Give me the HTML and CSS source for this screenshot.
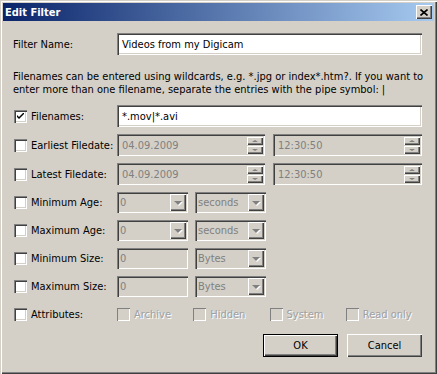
FILE: index.html
```html
<!DOCTYPE html>
<html lang="en">
<head>
    <meta charset="UTF-8">
    <title>Edit Filter</title>
    <link rel="stylesheet" href="styles.css">
</head>
<body>
    <div class="window">
        <div class="titlebar">
            <span class="title">Edit Filter</span>
            <span class="close-btn">
                <svg width="8" height="7" viewBox="0 0 8 7"><path d="M0.5 0.5 L7.5 6.5 M7.5 0.5 L0.5 6.5" stroke="#000" stroke-width="1.6" fill="none"/></svg>
            </span>
        </div>
        <div class="content">
            <div class="row">
                <span class="label">Filter Name:</span>
                <div class="field wide"><span class="value">Videos from my Digicam</span></div>
            </div>
            <p class="hint">Filenames can be entered using wildcards, e.g. *.jpg or index*.htm?. If you want to<br>enter more than one filename, separate the entries with the pipe symbol: |</p>

            <div class="row first">
                <label class="check"><span class="box"><svg width="7" height="7" viewBox="0 0 7 7"><path d="M0 2 L0 4 L2 6 L7 1 L7 -1 L2 4 Z" fill="#000"/></svg></span>Filenames:</label>
                <div class="field wide"><span class="value">*.mov|*.avi</span></div>
            </div>
            <div class="row">
                <label class="check"><span class="box"></span>Earliest Filedate:</label>
                <div class="field date disabled">
                    <span class="value">04.09.2009</span>
                    <span class="spinner"><span class="spin-btn"><i class="up"></i></span><span class="spin-btn"><i class="down"></i></span></span>
                </div>
                <div class="field time disabled">
                    <span class="value">12:30:50</span>
                    <span class="spinner"><span class="spin-btn"><i class="up"></i></span><span class="spin-btn"><i class="down"></i></span></span>
                </div>
            </div>
            <div class="row">
                <label class="check"><span class="box"></span>Latest Filedate:</label>
                <div class="field date disabled">
                    <span class="value">04.09.2009</span>
                    <span class="spinner"><span class="spin-btn"><i class="up"></i></span><span class="spin-btn"><i class="down"></i></span></span>
                </div>
                <div class="field time disabled">
                    <span class="value">12:30:50</span>
                    <span class="spinner"><span class="spin-btn"><i class="up"></i></span><span class="spin-btn"><i class="down"></i></span></span>
                </div>
            </div>
            <div class="row small">
                <label class="check"><span class="box"></span>Minimum Age:</label>
                <div class="field combo disabled"><span class="value">0</span><span class="drop"><i></i></span></div>
                <div class="field combo unit disabled"><span class="value">seconds</span><span class="drop"><i></i></span></div>
            </div>
            <div class="row small">
                <label class="check"><span class="box"></span>Maximum Age:</label>
                <div class="field combo disabled"><span class="value">0</span><span class="drop"><i></i></span></div>
                <div class="field combo unit disabled"><span class="value">seconds</span><span class="drop"><i></i></span></div>
            </div>
            <div class="row small">
                <label class="check"><span class="box"></span>Minimum Size:</label>
                <div class="field combo disabled"><span class="value">0</span></div>
                <div class="field combo unit disabled"><span class="value">Bytes</span><span class="drop"><i></i></span></div>
            </div>
            <div class="row small">
                <label class="check"><span class="box"></span>Maximum Size:</label>
                <div class="field combo disabled"><span class="value">0</span></div>
                <div class="field combo unit disabled"><span class="value">Bytes</span><span class="drop"><i></i></span></div>
            </div>
            <div class="row small attributes">
                <label class="check"><span class="box"></span>Attributes:</label>
                <span class="attr"><span class="box off"></span>Archive</span>
                <span class="attr"><span class="box off"></span>Hidden</span>
                <span class="attr"><span class="box off"></span>System</span>
                <span class="attr"><span class="box off"></span>Read only</span>
            </div>
            <div class="buttons">
                <span class="button default">OK</span>
                <span class="button">Cancel</span>
            </div>
        </div>
    </div>
</body>
</html>
```
FILE: styles.css
```css
* {
    margin: 0;
    padding: 0;
    box-sizing: border-box;
}
body {
    background: #d4d0c8;
    font-family: "DejaVu Sans Condensed", "Liberation Sans", sans-serif;
    font-size: 11px;
    color: #000;
}
.window {
    width: 437px;
    height: 374px;
    padding: 3px;
    background: #d4d0c8;
    box-shadow: inset 1px 1px #d4d0c8, inset 2px 2px #fff, inset -1px -1px #404040, inset -2px -2px #808080;
}
.titlebar {
    height: 18px;
    display: flex;
    align-items: center;
    justify-content: space-between;
    padding: 0 2px;
    background: linear-gradient(to right, #0a246a, #a6caf0);
}
.title {
    color: #fff;
    font-weight: bold;
    font-size: 11px;
}
.close-btn {
    width: 16px;
    height: 14px;
    display: flex;
    align-items: center;
    justify-content: center;
    background: #d4d0c8;
    box-shadow: inset 1px 1px #fff, inset -1px -1px #404040, inset -2px -2px #808080;
}
.content {
    padding: 12px 12px 0 10px;
}
.row {
    display: flex;
    align-items: center;
    height: 22px;
    margin-bottom: 7px;
}
.row.small {
    height: 21px;
}
.label, .check {
    width: 104px;
    flex: none;
    display: flex;
    align-items: center;
    white-space: nowrap;
}
.hint {
    margin: 15px 0 9px;
    line-height: 13px;
    white-space: nowrap;
}
.box {
    width: 13px;
    height: 13px;
    flex: none;
    margin: 0 4px 0 1px;
    background: #fff;
    display: flex;
    align-items: center;
    justify-content: center;
    box-shadow: inset 1px 1px #808080, inset 2px 2px #404040, inset -1px -1px #fff, inset -2px -2px #d4d0c8;
}
.box.off {
    background: #d4d0c8;
    margin-left: 0;
}
.field {
    height: 100%;
    display: flex;
    align-items: center;
    background: #fff;
    padding: 2px;
    box-shadow: inset 1px 1px #808080, inset 2px 2px #404040, inset -1px -1px #fff, inset -2px -2px #d4d0c8;
}
.field .value {
    flex: 1;
    padding-left: 3px;
    white-space: nowrap;
    overflow: hidden;
}
.field.wide {
    flex: 1;
}
.field.disabled {
    background: #d4d0c8;
    color: #808080;
}
.field.date {
    width: 148px;
}
.field.time {
    flex: 1;
    margin-left: 8px;
}
.field.combo {
    width: 71px;
}
.field.combo .value {
    padding-left: 1px;
}
.field.unit {
    margin-left: 7px;
}
.spinner {
    display: flex;
    flex-direction: column;
    justify-content: center;
    gap: 1px;
    height: 100%;
}
.spin-btn {
    width: 16px;
    height: 8px;
    display: flex;
    align-items: center;
    justify-content: center;
    background: #d4d0c8;
    box-shadow: inset 1px 1px #fff, inset -1px -1px #404040, inset -2px -2px #808080;
}
.spin-btn i {
    width: 0;
    height: 0;
    border-left: 3px solid transparent;
    border-right: 3px solid transparent;
}
.spin-btn i.up {
    border-bottom: 2px solid #808080;
}
.spin-btn i.down {
    border-top: 2px solid #808080;
}
.drop {
    width: 16px;
    height: 100%;
    display: flex;
    align-items: center;
    justify-content: center;
    background: #d4d0c8;
    box-shadow: inset 1px 1px #fff, inset -1px -1px #404040, inset -2px -2px #808080;
}
.drop i {
    width: 0;
    height: 0;
    border-left: 4px solid transparent;
    border-right: 4px solid transparent;
    border-top: 4px solid #808080;
    filter: drop-shadow(1px 1px 0 #fff);
}
.attributes {
    margin-top: 3px;
}
.attr {
    width: 78.5px;
    display: flex;
    align-items: center;
    color: #a0a0a0;
    text-shadow: 1px 1px 0 #fff;
    white-space: nowrap;
}
.attr .box {
    box-shadow: inset 1px 1px #808080, inset -1px -1px #fff;
}
.buttons {
    display: flex;
    justify-content: flex-end;
    gap: 9px;
    margin-top: 9px;
}
.button {
    width: 75px;
    height: 23px;
    display: flex;
    align-items: center;
    justify-content: center;
    background: #d4d0c8;
    box-shadow: inset 1px 1px #fff, inset -1px -1px #404040, inset -2px -2px #808080;
}
.button.default {
    box-shadow: inset 0 0 0 1px #000, inset 2px 2px #fff, inset -2px -2px #404040, inset -3px -3px #808080;
}
```
